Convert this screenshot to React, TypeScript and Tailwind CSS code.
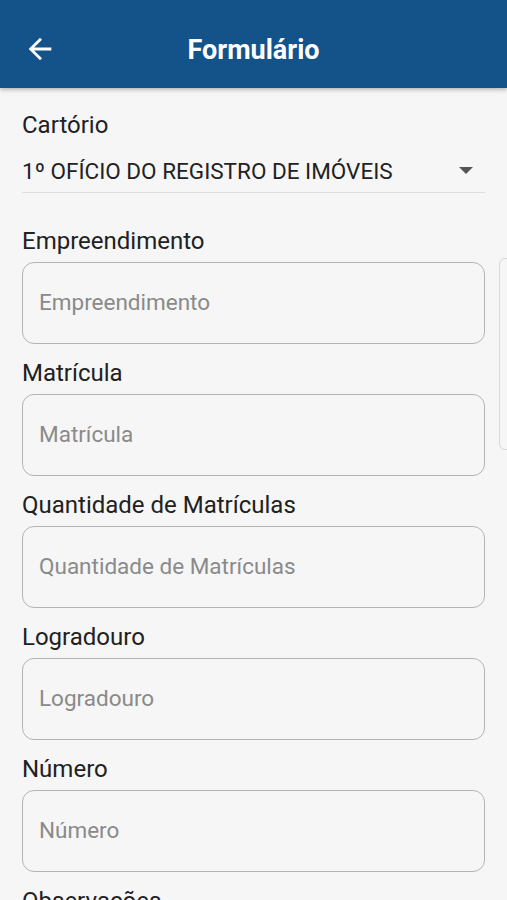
const fields = ["Empreendimento", "Matrícula", "Quantidade de Matrículas", "Logradouro", "Número"];

const Field = ({ label }: { label: string }) => (
  <div className="flex flex-col">
    <p className="text-[24px] leading-[30px] text-[#212121] h-[30px] mt-[14px] whitespace-nowrap">{label}</p>
    <div className="mt-[6px] h-[82px] rounded-[12px] border-[1.5px] border-[#b4b4b4] flex items-center px-4">
      <span className="text-[22.5px] text-[#8a8a8a] whitespace-nowrap">{label}</span>
    </div>
  </div>
);

export default function App() {
  return (
    <div className="w-[507px] h-[900px] overflow-hidden bg-[#f6f6f6] relative font-['Roboto',sans-serif]">
      <header className="h-[88px] bg-[#14528a] flex items-center pt-[12px] relative shadow-[0_2px_4px_rgba(0,0,0,0.25)] z-10">
        <svg width="34" height="34" viewBox="0 0 24 24" className="absolute left-[23px] top-[32px]">
          <path d="M20 11H7.83l5.59-5.59L12 4l-8 8 8 8 1.41-1.41L7.83 13H20v-2z" fill="#fff" />
        </svg>
        <h1 className="w-full text-center text-white font-bold text-[27px] leading-[32px]">Formulário</h1>
      </header>

      <div className="px-[22px] flex flex-col">
        <p className="text-[24px] leading-[30px] text-[#212121] mt-[22px]">Cartório</p>
        <div className="h-[53px] flex items-end justify-between pb-[8px] border-b border-[#dedede]">
          <span className="text-[22.5px] leading-[26px] text-[#222] whitespace-nowrap">1º OFÍCIO DO REGISTRO DE IMÓVEIS</span>
          <svg width="14" height="8" viewBox="0 0 14 8" className="mr-[12px] mb-[9px]">
            <path d="M0 0 L14 0 L7 7 Z" fill="#555" />
          </svg>
        </div>
        <div className="h-[19px]" />
        {fields.map((f) => (
          <Field key={f} label={f} />
        ))}
        <p className="text-[24px] leading-[30px] text-[#212121] mt-[14px]">Observações</p>
      </div>

      <div className="absolute left-[499px] top-[258px] w-[20px] h-[192px] rounded-[6px] border border-[#d8d8d8]" />
    </div>
  );
}
